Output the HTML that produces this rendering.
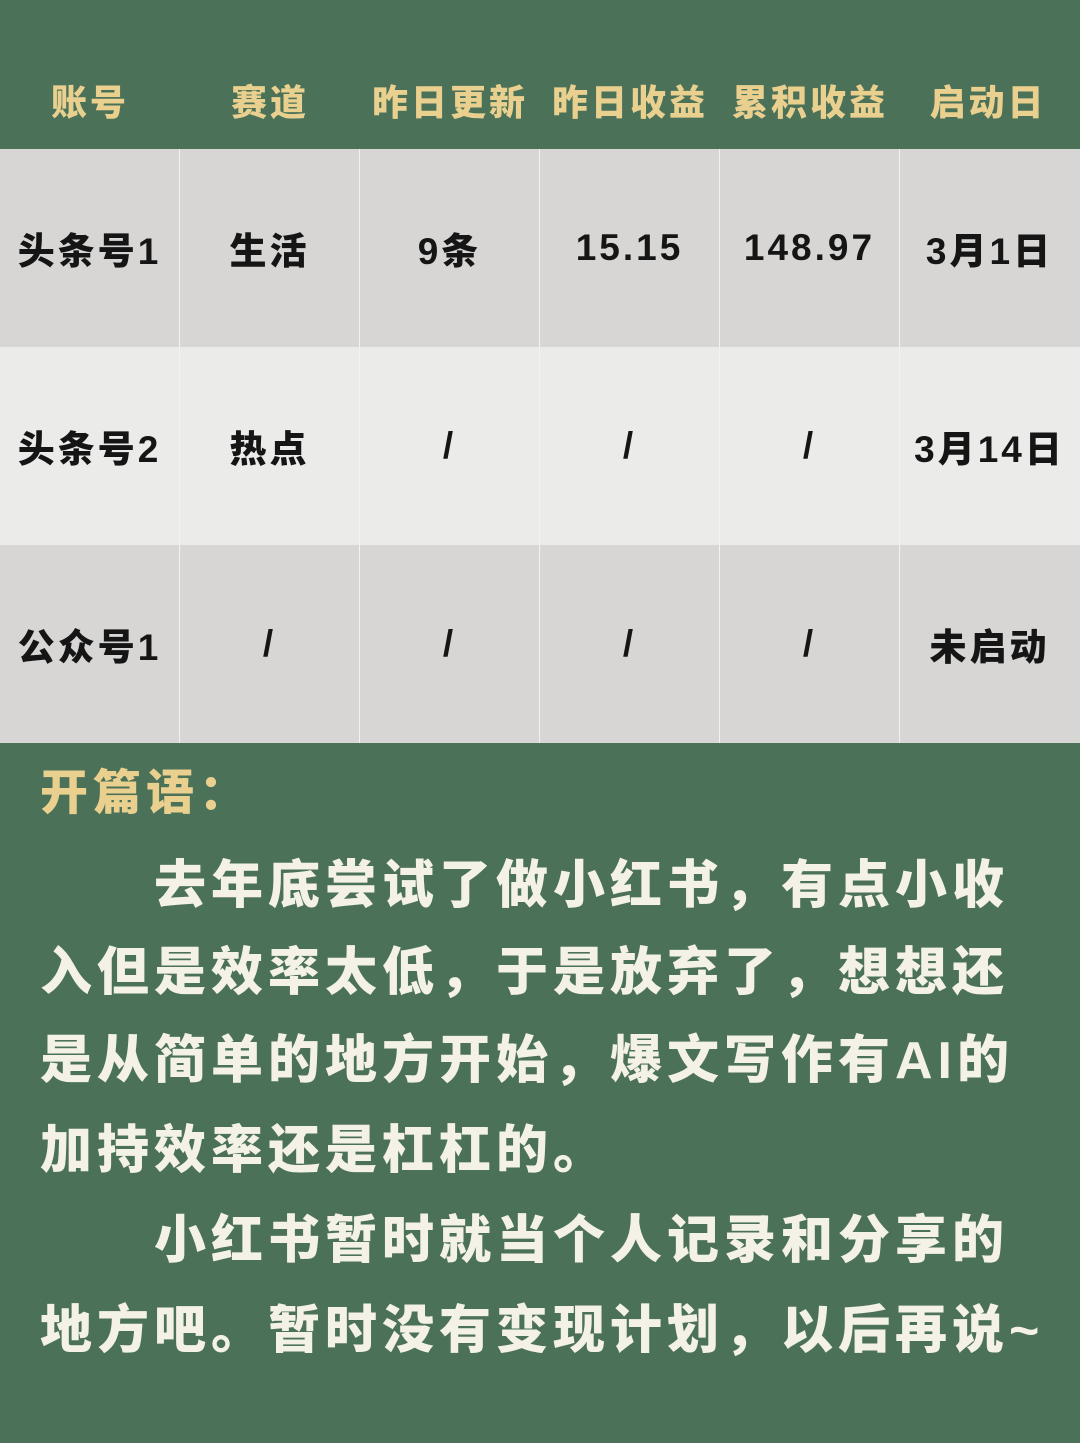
<!DOCTYPE html>
<html><head><meta charset="utf-8"><style>
body{margin:0;width:1080px;height:1443px;background:#4b7159;font-family:"Liberation Sans","Noto Sans CJK SC",sans-serif;font-weight:900;overflow:hidden;position:relative}
.hd{position:absolute;top:0;left:0;width:1080px;height:148px}
.hd div{position:absolute;top:100px;transform:translate(-50%,-50%);color:#e9d08f;font-size:36px;white-space:nowrap;letter-spacing:3px}
.row{position:absolute;left:0;width:1080px;height:198px}
.row div{position:absolute;top:0;height:100%;width:179px;display:flex;align-items:center;justify-content:center;font-size:37px;letter-spacing:3px;color:#151515;border-right:1px solid #f2f2f2}
.p{position:absolute;left:40px;color:#f4f1e7;font-size:52px;letter-spacing:5px;white-space:nowrap;line-height:1}
</style></head><body>
<div class="hd">
<div style="left:90px">账号</div><div style="left:270px">赛道</div><div style="left:450px">昨日更新</div><div style="left:630px">昨日收益</div><div style="left:810px">累积收益</div><div style="left:988px">启动日</div>
</div>
<div class="row" style="top:149px;background:#d7d6d4"><div style="left:0">头条号1</div><div style="left:180px">生活</div><div style="left:360px">9条</div><div style="left:540px">15.15</div><div style="left:720px">148.97</div><div style="left:900px;border:0">3月1日</div></div>
<div class="row" style="top:347px;background:#ebebea"><div style="left:0">头条号2</div><div style="left:180px">热点</div><div style="left:360px">/</div><div style="left:540px">/</div><div style="left:720px">/</div><div style="left:900px;border:0">3月14日</div></div>
<div class="row" style="top:545px;background:#d7d6d4;height:198px"><div style="left:0">公众号1</div><div style="left:180px">/</div><div style="left:360px">/</div><div style="left:540px">/</div><div style="left:720px">/</div><div style="left:900px;border:0">未启动</div></div>
<div class="p" style="top:770px;color:#e9d08f;font-size:48px">开篇语：</div>
<div class="p" style="top:860px;left:154px">去年底尝试了做小红书，有点小收</div>
<div class="p" style="top:947px">入但是效率太低，于是放弃了，想想还</div>
<div class="p" style="top:1035px">是从简单的地方开始，爆文写作有AI的</div>
<div class="p" style="top:1125px">加持效率还是杠杠的。</div>
<div class="p" style="top:1215px;left:154px">小红书暂时就当个人记录和分享的</div>
<div class="p" style="top:1305px">地方吧。暂时没有变现计划，以后再说~</div>
</body></html>
